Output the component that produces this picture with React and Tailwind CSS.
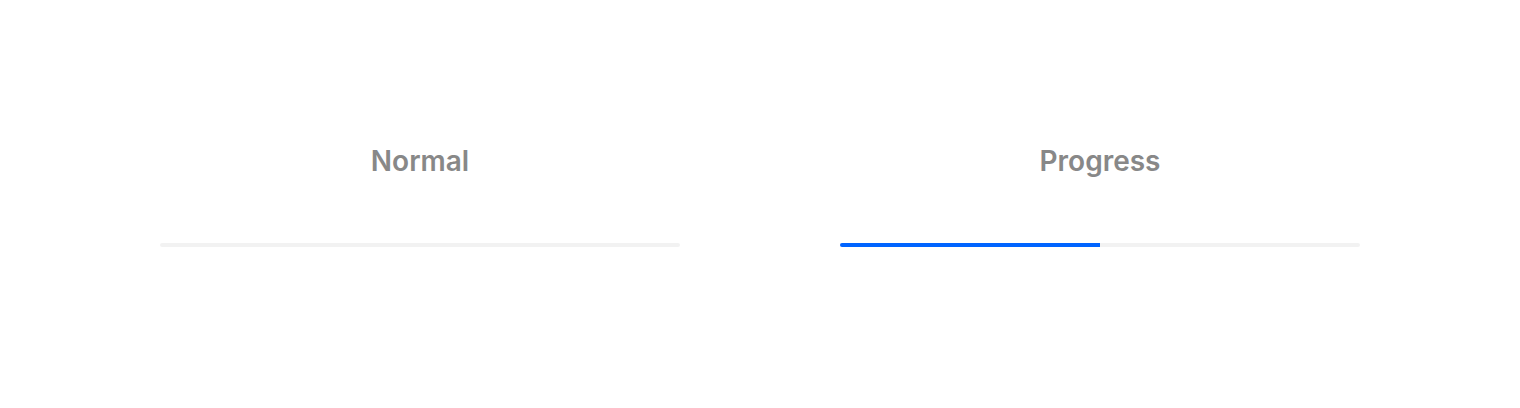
export default function App() {
  return (
    <div className="w-[1520px] h-[408px] bg-white flex justify-center gap-[160px] pt-[144px]" style={{ fontFamily: 'Inter, "Noto Sans", sans-serif' }}>
      <div className="w-[520px] flex flex-col items-center">
        <div className="text-[28px] leading-[34px] font-semibold text-[#888888]">Normal</div>
        <div className="mt-[65px] w-full h-[4px] rounded-full bg-[#f2f2f2]"></div>
      </div>
      <div className="w-[520px] flex flex-col items-center">
        <div className="text-[28px] leading-[34px] font-semibold text-[#888888]">Progress</div>
        <div className="mt-[65px] w-full h-[4px] rounded-full bg-[#f2f2f2] flex">
          <div className="w-1/2 h-full rounded-l-full bg-[#0064ff]"></div>
        </div>
      </div>
    </div>
  );
}
